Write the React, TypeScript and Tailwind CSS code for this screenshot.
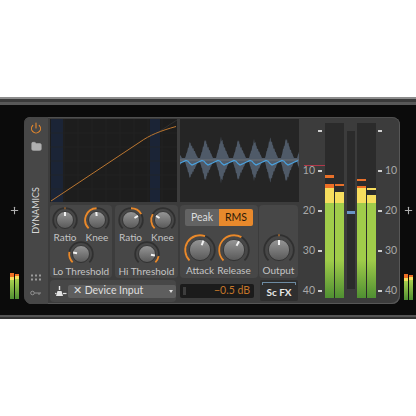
import { Folder, Power, Plus } from 'lucide-react';

const ORANGE = '#e8892c';

function polar(cx: number, cy: number, r: number, deg: number) {
  const a = ((deg - 90) * Math.PI) / 180;
  return [cx + r * Math.cos(a), cy + r * Math.sin(a)];
}

function arc(cx: number, cy: number, r: number, from: number, to: number) {
  const [x1, y1] = polar(cx, cy, r, from);
  const [x2, y2] = polar(cx, cy, r, to);
  const large = Math.abs(to - from) > 180 ? 1 : 0;
  return `M${x1} ${y1}A${r} ${r} 0 ${large} ${to > from ? 1 : 0} ${x2} ${y2}`;
}

// from/to are the orange value arc, pointer is the white line on the cap
function Knob({ size, from, to, pointer, id }: { size: number; from: number; to: number; pointer: number; id: string }) {
  const c = size / 2;
  const r = c - 2.2;
  const [x1, y1] = polar(c, c, r * 0.34, pointer);
  const [x2, y2] = polar(c, c, r * 0.68, pointer);
  return (
    <svg width={size} height={size} className="block shrink-0">
      <defs>
        <linearGradient id={id} x1="0" y1="0" x2="0" y2="1">
          <stop offset="0" stopColor="#979797" />
          <stop offset="1" stopColor="#585858" />
        </linearGradient>
      </defs>
      <path d={arc(c, c, r, -135, 135)} fill="none" stroke="#303030" strokeWidth="1.8" />
      <path d={arc(c, c, r, from, to)} fill="none" stroke={ORANGE} strokeWidth="1.9" />
      <circle cx={c} cy={c} r={r * 0.72} fill={`url(#${id})`} stroke="#2a2a2a" strokeWidth="0.8" />
      <path d={`M${x1} ${y1}L${x2} ${y2}`} stroke="#f2f2f2" strokeWidth="2" />
    </svg>
  );
}

function KnobUnit({ label, size = 28, from, to, pointer, id }: { label: string; size?: number; from: number; to: number; pointer: number; id: string }) {
  return (
    <div className="flex w-[30px] flex-col items-center">
      <Knob size={size} from={from} to={to} pointer={pointer} id={id} />
      <span className="-mt-[3px] whitespace-nowrap text-[10px] leading-[13px] text-[#c4c4c4]">{label}</span>
    </div>
  );
}

function CurveGraph() {
  const cols = [14, 28, 42, 56, 70, 84, 98, 112];
  const rows = [14, 28, 42, 56, 70];
  return (
    <svg width="127" height="83" className="block">
      <rect width="127" height="83" fill="#1d1d1d" />
      <rect x="1" y="0" width="12" height="83" fill="#1b2436" />
      <rect x="100" y="0" width="10" height="83" fill="#1b2436" />
      {cols.map((x) => (
        <path key={x} d={`M${x} 0V83`} stroke="#272727" strokeWidth="0.6" />
      ))}
      {rows.map((y) => (
        <path key={y} d={`M0 ${y}H127`} stroke="#272727" strokeWidth="0.6" />
      ))}
      <path d="M110 12L127 1" stroke="#353535" strokeWidth="0.8" />
      <path d="M1 82L90 23C100 16 110 12 126 7.5" fill="none" stroke="#bb7630" strokeWidth="1" />
    </svg>
  );
}

function Waveform() {
  const peaks = [-6, 10, 25, 41, 58, 74, 90, 106, 122];
  const heights = [0.7, 0.8, 0.92, 1, 0.9, 0.88, 1, 1, 0.8];
  const top: string[] = [];
  const bottom: string[] = [];
  for (let x = 0; x <= 119; x += 0.5) {
    let env = 0;
    peaks.forEach((p, i) => {
      const d = x - p;
      env = Math.max(env, (d < 0 ? 1 + d / 5 : 1 - d / 8) * heights[i]);
    });
    const noise = ((x * 2 * 37) % 11) / 11;
    const amp = 2 + Math.max(env, 0) * 23 * (0.72 + 0.28 * noise);
    top.push(`${x} ${41 - amp}`);
    bottom.push(`${x} ${41 + amp}`);
  }
  const body = `M${top.join('L')}L${bottom.reverse().join('L')}Z`;
  const line: string[] = [];
  for (let x = 0; x <= 119; x += 2) {
    const phase = (x + 4) % 16;
    line.push(`${x} ${phase < 11 ? 46 - phase * 0.45 : 41 + (phase - 11) * 1.2}`);
  }
  return (
    <svg width="119" height="83" className="block">
      <rect width="119" height="83" fill="#252525" />
      <path d={body} fill="#4f5a68" />
      <path d="M0 41H119" stroke="#7d7d7d" strokeWidth="0.7" />
      <path d={`M${line.join('L')}`} fill="none" stroke="#4aa0dc" strokeWidth="1.2" />
    </svg>
  );
}

function Bar({ peak, peakH = 3, peakColor = '#e8702a', orange = 0, yellow }: { peak: number; peakH?: number; peakColor?: string; orange?: number; yellow: number }) {
  return (
    <div className="relative flex h-[175px] w-[9px] flex-col justify-end bg-[#2b2b2b]">
      <div className="absolute left-0 right-0" style={{ top: peak, height: peakH, backgroundColor: peakColor }} />
      <div className="bg-[#ee6f25]" style={{ height: orange }} />
      <div className="bg-[#f7de5e]" style={{ height: yellow }} />
      <div className="h-[95px] bg-gradient-to-b from-[#a0cc4a] from-60% to-[#4f8f32]" />
    </div>
  );
}

function Scale({ side }: { side: 'left' | 'right' }) {
  const marks = ['', '10', '20', '30', '40'];
  return (
    <div className="flex flex-col gap-[24px] pt-[4px]">
      {marks.map((m) => (
        <div key={m} className={`flex h-[16px] items-center gap-[3px] ${side === 'left' ? 'flex-row justify-end' : 'flex-row-reverse justify-end'}`}>
          <span className="text-[10.5px] text-[#a8a8a8]">{m}</span>
          <span className="h-[1.5px] w-[4px] bg-[#cfcfcf]" />
        </div>
      ))}
    </div>
  );
}

function MiniMeter() {
  return (
    <div className="flex gap-[1px]">
      <div className="flex h-[26px] w-[4px] flex-col">
        <div className="h-[4px] bg-[#ee6f25]" />
        <div className="h-[3px] bg-[#f7de5e]" />
        <div className="flex-1 bg-gradient-to-b from-[#a8d04e] to-[#4f8f32]" />
      </div>
      <div className="mt-[1px] flex h-[25px] w-[4px] flex-col">
        <div className="h-[2px] bg-[#ee6f25]" />
        <div className="h-[3px] bg-[#f7de5e]" />
        <div className="flex-1 bg-gradient-to-b from-[#a8d04e] to-[#4f8f32]" />
      </div>
    </div>
  );
}

export default function App() {
  return (
    <div className="h-[416px] w-[416px] overflow-hidden bg-white font-['Lato',sans-serif]">
      <div className="h-[97px]" />
      <div className="h-[2px] bg-[#8c8c8c]" />
      <div className="h-[3px] bg-[#3a3a3a]" />
      <div className="h-[3px] bg-[#585858]" />

      <div className="flex h-[210px] bg-[#0b0b0b]">
        {/* left gutter */}
        <div className="flex w-[24px] flex-col items-center">
          <Plus size={11} strokeWidth={2.4} className="mt-[100px] ml-[4px] text-[#b0b0b0]" />
          <div className="mt-[57px] ml-[5px]">
            <MiniMeter />
          </div>
        </div>

        {/* device panel */}
        <div className="mt-[12px] flex h-[187px] w-[376px] rounded-lg rounded-tl-md bg-[#3c3c3c] shadow-[inset_-1px_-1px_0_#575757,inset_0_1px_0_#4f4f4f]">
          <div className="flex w-[24px] shrink-0 flex-col items-center rounded-l-lg bg-[#474747] pt-[5px] pb-[4px]">
            <Power size={12} strokeWidth={2.2} className="text-[#e8892c]" />
            <Folder size={11} className="mt-[7px] fill-[#b0b0b0] text-[#b0b0b0]" />
            <span className="mt-[35px] rotate-180 text-[9px] leading-[12px] text-[#d8d8d8] [writing-mode:vertical-rl]">DYNAMICS</span>
            <svg width="10" height="8" className="mt-auto block text-[#9a9a9a]">
              {[1, 5, 9].map((x) =>
                [1.5, 5.5].map((y) => <rect key={`${x}-${y}`} x={x - 1} y={y - 1} width="2" height="2" fill="currentColor" />),
              )}
            </svg>
            <svg width="12" height="6" className="mt-[8px] mb-[4px] block">
              <circle cx="2.5" cy="3" r="1.8" fill="none" stroke="#9a9a9a" strokeWidth="0.9" />
              <path d="M4.5 3H11M9 3V5" stroke="#9a9a9a" strokeWidth="0.9" fill="none" />
            </svg>
          </div>

          <div className="ml-[2px] flex w-[249px] shrink-0 flex-col pt-[2px]">
            <div className="flex h-[83px] gap-[3px]">
              <CurveGraph />
              <Waveform />
            </div>

            <div className="mt-[3px] flex h-[73px]">
              <div className="flex w-[62px] flex-col items-center rounded-sm bg-[#474747] pt-[1px]">
                <div className="flex gap-[2px]">
                  <KnobUnit label="Ratio" from={-2} to={2} pointer={0} id="k1" />
                  <KnobUnit label="Knee" from={-135} to={-2} pointer={-5} id="k2" />
                </div>
                <div className="-mt-[4px]">
                  <KnobUnit label="Lo Threshold" from={-135} to={-80} pointer={-80} id="k3" />
                </div>
              </div>
              <div className="ml-[3px] flex w-[63px] flex-col items-center rounded-sm bg-[#474747] pt-[1px]">
                <div className="flex gap-[2px]">
                  <KnobUnit label="Ratio" from={0} to={60} pointer={60} id="k4" />
                  <KnobUnit label="Knee" from={-135} to={-60} pointer={-60} id="k5" />
                </div>
                <div className="-mt-[4px]">
                  <KnobUnit label="Hi Threshold" from={100} to={135} pointer={100} id="k6" />
                </div>
              </div>
              <div className="ml-[2px] flex w-[78px] flex-col items-center rounded-sm bg-[#474747] pt-[4px]">
                <div className="flex h-[17px] w-[68px] overflow-hidden rounded-[2px] text-[10.5px] leading-[17px]">
                  <span className="w-[34px] bg-[#636363] text-center text-[#dcdcdc]">Peak</span>
                  <span className="w-[34px] bg-[#e8892c] text-center text-[#2a1a08]">RMS</span>
                </div>
                <div className="mt-[7px] flex gap-0">
                  <div className="w-[34px]">
                    <KnobUnit label="Attack" size={34} from={-135} to={20} pointer={20} id="k7" />
                  </div>
                  <div className="w-[34px]">
                    <KnobUnit label="Release" size={34} from={-135} to={30} pointer={30} id="k8" />
                  </div>
                </div>
              </div>
              <div className="ml-[1px] flex w-[39px] flex-col items-center rounded-sm bg-[#474747] pt-[28px]">
                <KnobUnit label="Output" size={34} from={-2} to={2} pointer={0} id="k9" />
              </div>
            </div>

            <div className="mt-[2px] flex h-[22px]">
              <div className="flex w-[126px] items-center rounded-sm bg-[#474747] pl-[5px]">
                <svg width="12" height="11" className="block shrink-0">
                  <path d="M4.5 0V4" stroke="#e4e4e4" strokeWidth="1.4" />
                  <path d="M1 10L2.5 5H6.5L8 10Z" fill="#e4e4e4" />
                  <circle cx="0.8" cy="7.5" r="0.8" fill="#e4e4e4" />
                  <path d="M8 7.5H11.5" stroke="#e4e4e4" strokeWidth="1.2" />
                </svg>
                <div className="ml-[1px] flex h-[13px] flex-1 items-center rounded-[2px] bg-[#5e5e5e] pl-[5px] pr-[3px] text-[10.5px] text-[#dedede]">
                  <span>✕ Device Input</span>
                  <span className="ml-auto h-0 w-0 border-x-[2.5px] border-t-[3px] border-x-transparent border-t-[#e0e0e0]" />
                </div>
              </div>
              <div className="ml-[4px] mt-[4px] flex h-[14px] w-[74px] items-center rounded-[2px] bg-[#1b1b1b] pl-[3px] pr-[4px]">
                <span className="h-[8px] w-[3px] bg-[#3d3d3d]" />
                <span className="ml-auto text-[10.5px] text-[#c4772a]">−0.5 dB</span>
              </div>
              <div className="ml-[6px] flex h-[21px] w-[38px] flex-col rounded-[2px] bg-[#2f2f2f] px-[2px] pt-[2px] text-center text-[10px] font-bold leading-[14px] text-[#e8e8e8]">
                <div className="h-[3px] rounded-t-[1px] border-x border-t border-[#6d8ba3]" />
                Sc FX
              </div>
            </div>
          </div>

          {/* meters */}
          <div className="relative ml-[2px] flex w-[97px] shrink-0 pt-[2px]">
            <div className="absolute left-[3px] top-[48px] h-[1px] w-[21px] bg-[#b0384a]" />
            <div className="w-[21px]">
              <Scale side="left" />
            </div>
            <div className="ml-[3px] mt-[4px] flex h-[175px] gap-[1px] bg-[#2b2b2b]">
              <Bar peak={52} orange={4} yellow={15} />
              <Bar peak={61} peakH={2} yellow={11} />
            </div>
            <div className="ml-[3px] mt-[12px] h-[158px] w-[8px] bg-[#2b2b2b]">
              <div className="mt-[80px] h-[3px] bg-[#6a94c4]" />
            </div>
            <div className="ml-[2px] mt-[4px] flex h-[175px] gap-[1px] bg-[#2b2b2b]">
              <Bar peak={56} peakH={2} orange={2} yellow={15} />
              <Bar peak={65} peakH={2} peakColor="#f7de5e" yellow={8} />
            </div>
            <div className="ml-[2px]">
              <Scale side="right" />
            </div>
          </div>
        </div>

        {/* right gutter */}
        <div className="flex w-[16px] flex-col items-center">
          <Plus size={11} strokeWidth={2.4} className="mt-[100px] text-[#b0b0b0]" />
          <div className="mt-[58px]">
            <MiniMeter />
          </div>
        </div>
      </div>

      <div className="h-[2px] bg-[#555555]" />
      <div className="h-[2px] bg-[#333333]" />
    </div>
  );
}
